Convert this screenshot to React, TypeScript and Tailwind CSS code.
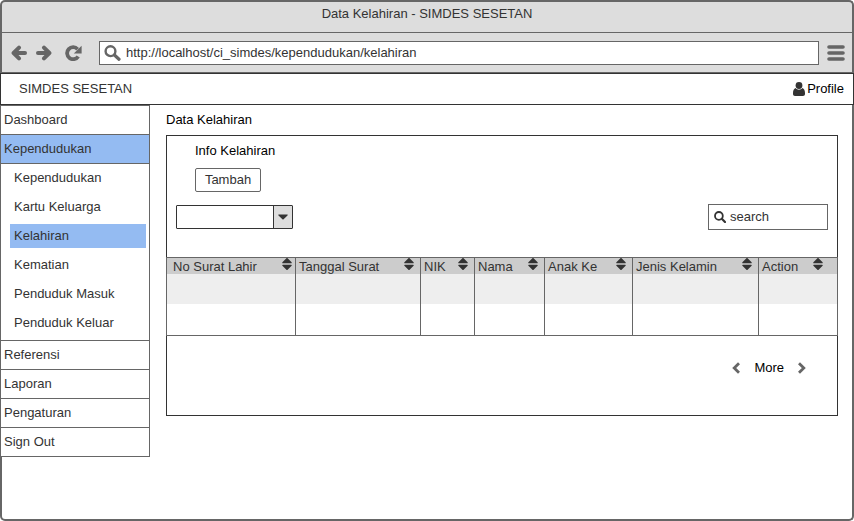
const submenu = [
  'Kependudukan',
  'Kartu Keluarga',
  'Kelahiran',
  'Kematian',
  'Penduduk Masuk',
  'Penduduk Keluar',
];

const columns = [
  { label: 'No Surat Lahir', cell: 'w-[129px]', inner: 'pl-1.5 pr-[3px]' },
  { label: 'Tanggal Surat', cell: 'w-[125px]', inner: 'pl-[3px] pr-1.5' },
  { label: 'NIK', cell: 'w-[54px]', inner: 'pl-[3px] pr-1.5' },
  { label: 'Nama', cell: 'w-[70px]', inner: 'pl-[3px] pr-1.5' },
  { label: 'Anak Ke', cell: 'w-[88px]', inner: 'pl-[3px] pr-1.5' },
  { label: 'Jenis Kelamin', cell: 'w-[126px]', inner: 'pl-[3px] pr-1.5' },
  { label: 'Action', cell: '', inner: 'pl-[3px] pr-3.5' },
];

function Arrow({ className = '' }: { className?: string }) {
  return (
    <svg viewBox="0 0 16 16" className={`size-4 ${className}`} fill="none" stroke="#666" strokeLinecap="round" strokeLinejoin="round">
      <path d="M14 8H4" strokeWidth="4" />
      <path d="M8 2.600L2.600 8 8 13.400" strokeWidth="4" />
    </svg>
  );
}

function SortIcon() {
  return (
    <svg viewBox="0 0 10 12" className="h-3 w-2.5 shrink-0" fill="#333" aria-hidden="true">
      <path d="M4.4.3a.8.8 0 0 1 1.2 0L9.6 4.2c.4.5.1 1-.5 1H.9c-.6 0-.9-.5-.5-1z" />
      <path d="M4.4 11.7a.8.8 0 0 0 1.2 0L9.6 7.8c.4-.5.1-1-.5-1H.9c-.6 0-.9.5-.5 1z" />
    </svg>
  );
}

function Chevron({ className = '' }: { className?: string }) {
  return (
    <svg viewBox="0 0 8 12" className={`h-3 w-2 ${className}`} fill="none" stroke="#666" strokeWidth="2.8" aria-hidden="true">
      <path d="M7 1.2L2.2 6 7 10.8" />
    </svg>
  );
}

function BrowserBar() {
  return (
    <header className="rounded-t-[5px] border-x-2 border-t-2 border-[#666] bg-[#ddd]">
      <h1 className="h-[31px] border-b border-[#666] text-center leading-[23px]">Data Kelahiran - SIMDES SESETAN</h1>
      <div className="flex h-[39px] items-center pr-[7px] pl-[9px]">
        <button aria-label="Back"><Arrow /></button>
        <button aria-label="Forward" className="ml-[9px]"><Arrow className="-scale-x-100" /></button>
        <button aria-label="Reload" className="ml-[13px]">
          <svg viewBox="0 0 18 16" className="h-4 w-[18px]" fill="none">
            <path d="M12.600 4.200A6 6 0 1 0 13.200 11.400" stroke="#666" strokeWidth="3.800" />
            <path d="M16.600.8v7.600H8.800z" fill="#666" />
          </svg>
        </button>
        <label className="ml-4 flex h-6 flex-1 items-center border border-[#666] bg-white pl-1">
          <svg viewBox="0 0 17 16" className="h-4 w-[17px] shrink-0" fill="none" stroke="#666">
            <circle cx="6.5" cy="6.2" r="4.9" strokeWidth="2.4" />
            <path d="M10.4 10l4.6 4.2" strokeWidth="3.2" strokeLinecap="round" />
          </svg>
          <input
            aria-label="Address"
            className="ml-[5px] min-w-0 flex-1 bg-transparent outline-none"
            defaultValue="http://localhost/ci_simdes/kependudukan/kelahiran"
          />
        </label>
        <button aria-label="Menu" className="ml-2">
          <svg viewBox="0 0 18 16" className="h-4 w-[18px]" stroke="#666" strokeWidth="3.6" strokeLinecap="round">
            <path d="M2 2h14M2 8h14M2 14h14" />
          </svg>
        </button>
      </div>
    </header>
  );
}

function Sidebar() {
  const row = 'block h-[29px] border-b border-[#666] pl-[3px] leading-[27px]';
  return (
    <nav className="-ml-0.5 w-[150px] shrink-0 self-start border-x border-t border-[#666] bg-white">
      <a href="#dashboard" className={row}>Dashboard</a>
      <a href="#kependudukan" className={`${row} bg-[#94bbf2]`}>Kependudukan</a>
      <ul className="flex flex-col gap-[5px] border-b border-[#666] pt-0.5 pr-[3px] pb-[5px] pl-[9px]">
        {submenu.map((item) => (
          <li key={item}>
            <a href="#data" className={`block h-6 pl-1 leading-[23px] ${item === 'Kelahiran' ? 'bg-[#94bbf2]' : ''}`}>
              {item}
            </a>
          </li>
        ))}
      </ul>
      <a href="#referensi" className={row}>Referensi</a>
      <a href="#laporan" className={row}>Laporan</a>
      <a href="#pengaturan" className={row}>Pengaturan</a>
      <a href="#signout" className={row}>Sign Out</a>
    </nav>
  );
}

function DataTable() {
  return (
    <div className="-mx-px">
      <table className="w-full table-fixed border-separate border-spacing-0 border border-r-0 border-[#666]">
        <thead>
          <tr className="h-4 bg-[#ccc]">
            {columns.map((c) => (
              <th key={c.label} className={`border-r border-[#666] p-0 text-left font-normal ${c.cell}`}>
                <div className={`flex h-4 items-start justify-between leading-[17px] whitespace-nowrap ${c.inner}`}>
                  {c.label}
                  <SortIcon />
                </div>
              </th>
            ))}
          </tr>
        </thead>
        <tbody>
          <tr className="h-[30px] bg-[#eee]">
            {columns.map((c) => <td key={c.label} className="border-r border-[#666] p-0" />)}
          </tr>
          <tr className="h-[31px]">
            {columns.map((c) => <td key={c.label} className="border-r border-[#666] p-0" />)}
          </tr>
        </tbody>
      </table>
    </div>
  );
}

export default function App() {
  return (
    <div className="flex min-h-screen flex-col bg-white font-['Liberation_Sans','Arial',sans-serif] text-[13px] text-[#333]">
      <BrowserBar />
      <div className="border-t border-[#666]">
        <div className="flex h-8 items-center justify-between border border-[#333] pr-[9px] pl-[18px]">
          <span>SIMDES SESETAN</span>
          <a href="#profile" className="flex items-center gap-0.5 text-black">
            <svg viewBox="0 0 12 14" className="h-3.5 w-3" fill="#333" aria-hidden="true">
              <path d="M2.6 6C1 6.600 0 8.400 0 11v1c0 1.200.8 2 2 2h8c1.200 0 2-.8 2-2v-1c0-2.600-1-4.400-2.600-5C8.600 7 7.400 7.700 6 7.700S3.400 7 2.600 6z" />
              <circle cx="6" cy="3.500" r="3.400" />
            </svg>
            Profile
          </a>
        </div>
      </div>
      <div className="flex flex-1 rounded-b-[5px] border-x-2 border-b-2 border-[#666]">
        <Sidebar />
        <main className="min-w-0 flex-1 pr-3.5 pb-4 pl-4">
          <h2 className="h-[30px] leading-[29px] text-black">Data Kelahiran</h2>
          <section className="border border-[#333] pb-[37px]">
            <div className="pt-1.5 pl-7">
              <h3 className="leading-[18px] text-black">Info Kelahiran</h3>
              <button className="mt-2 h-6 w-[66px] rounded-[2px] border border-[#666] leading-[22px]">Tambah</button>
            </div>
            <div className="flex items-center justify-between px-[9px] pt-3 pb-[27px]">
              <div className="grid w-[117px]">
                <select aria-label="Filter" className="col-start-1 row-start-1 h-6 w-full appearance-none rounded-[1px] border border-[#333] bg-white">
                  <option></option>
                </select>
                <span className="pointer-events-none col-start-1 row-start-1 m-px flex w-[19px] items-center justify-center justify-self-end border-l border-[#333] bg-[#ddd]">
                  <svg viewBox="0 0 10 6" className="h-1.5 w-2.5" fill="#333">
                    <path d="M.9.5h8.200c.6 0 .8.5.4.9L5.600 5.200a.8.8 0 0 1-1.200 0L.5 1.400C.1 1 .3.500.9.500z" />
                  </svg>
                </span>
              </div>
              <label className="flex h-[26px] w-[120px] items-center border border-[#666] pl-[5px]">
                <svg viewBox="0 0 12 12" className="size-3 shrink-0" fill="none" stroke="#333">
                  <circle cx="4.900" cy="4.900" r="3.900" strokeWidth="1.800" />
                  <path d="M7.800 7.800l3.200 3.200" strokeWidth="2.200" strokeLinecap="round" />
                </svg>
                <input aria-label="Search" placeholder="search" className="ml-1 min-w-0 flex-1 bg-transparent outline-none placeholder:text-[#333]" />
              </label>
            </div>
            <DataTable />
            <div className="flex items-center justify-end gap-3.5 pt-[22px] pr-[31px] text-black">
              <button aria-label="Previous"><Chevron /></button>
              <span>More</span>
              <button aria-label="Next"><Chevron className="-scale-x-100" /></button>
            </div>
          </section>
        </main>
      </div>
    </div>
  );
}
